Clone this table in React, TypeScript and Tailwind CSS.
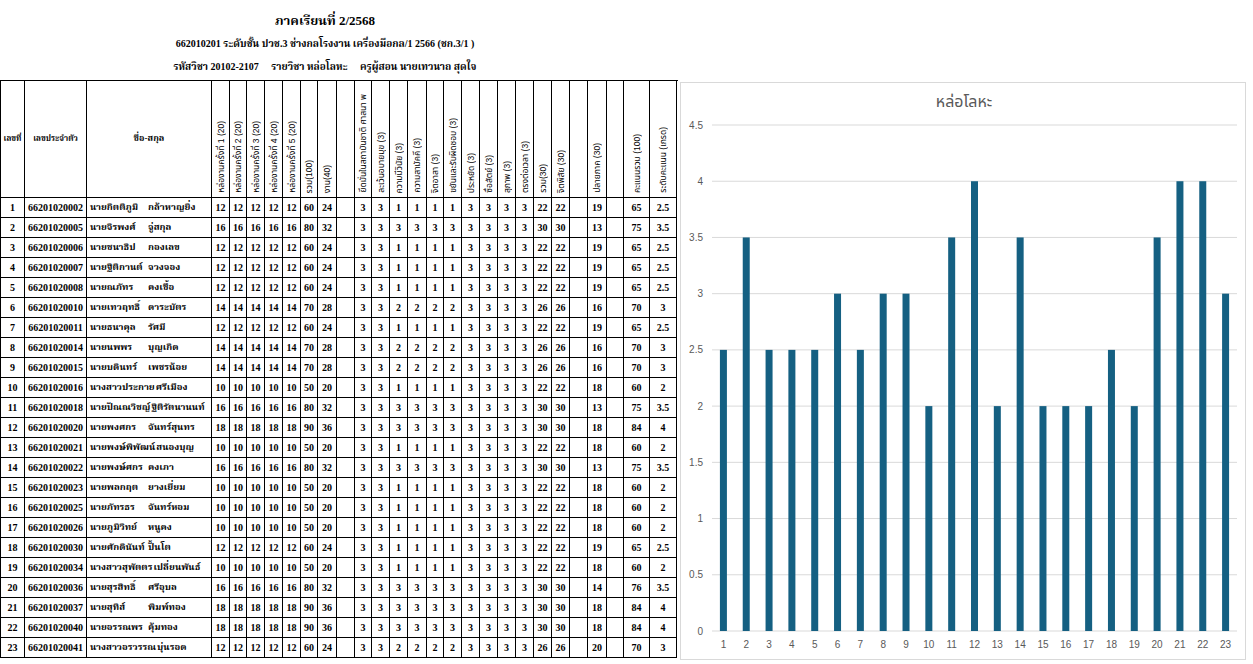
const FONT = "font-['Liberation_Serif','Noto_Serif_Thai','Noto_Sans_Thai','Tlwg_Typo','Norasi','Garuda','Loma','DejaVu_Serif',serif]";
const SANS = "font-['Liberation_Sans','Noto_Sans_Thai','Tlwg_Typo','Garuda','Loma','DejaVu_Sans',sans-serif]";

type Row = {
  id: string;
  first: string;
  last: string;
  h: number;
  p: 'a' | 'b' | 'c';
  fin: number;
  total: number;
  grade: number;
};

const pattern = {
  a: [3, 3, 1, 1, 1, 1, 3, 3, 3, 3],
  b: [3, 3, 2, 2, 2, 2, 3, 3, 3, 3],
  c: [3, 3, 3, 3, 3, 3, 3, 3, 3, 3],
};

const rows: Row[] = [
  { id: '66201020002', first: 'นายกิตติภูมิ', last: 'กล้าหาญยิ่ง', h: 12, p: 'a', fin: 19, total: 65, grade: 2.5 },
  { id: '66201020005', first: 'นายจิรพงศ์', last: 'จู่สกุล', h: 16, p: 'c', fin: 13, total: 75, grade: 3.5 },
  { id: '66201020006', first: 'นายชนาธิป', last: 'กองเลข', h: 12, p: 'a', fin: 19, total: 65, grade: 2.5 },
  { id: '66201020007', first: 'นายฐิติกานต์', last: 'จวงจอง', h: 12, p: 'a', fin: 19, total: 65, grade: 2.5 },
  { id: '66201020008', first: 'นายณภัทร', last: 'คงเชื้อ', h: 12, p: 'a', fin: 19, total: 65, grade: 2.5 },
  { id: '66201020010', first: 'นายเทวฤทธิ์', last: 'ดาระบัตร', h: 14, p: 'b', fin: 16, total: 70, grade: 3 },
  { id: '66201020011', first: 'นายธนาคุล', last: 'รัศมี', h: 12, p: 'a', fin: 19, total: 65, grade: 2.5 },
  { id: '66201020014', first: 'นายนพพร', last: 'บุญเกิด', h: 14, p: 'b', fin: 16, total: 70, grade: 3 },
  { id: '66201020015', first: 'นายบดินทร์', last: 'เพชรน้อย', h: 14, p: 'b', fin: 16, total: 70, grade: 3 },
  { id: '66201020016', first: 'นางสาวประกาย', last: 'ศรีเมือง', h: 10, p: 'a', fin: 18, total: 60, grade: 2 },
  { id: '66201020018', first: 'นายปัณณวิชญ์', last: 'ฐิติรัตนานนท์', h: 16, p: 'c', fin: 13, total: 75, grade: 3.5 },
  { id: '66201020020', first: 'นายพงศกร', last: 'จันทร์สุนทร', h: 18, p: 'c', fin: 18, total: 84, grade: 4 },
  { id: '66201020021', first: 'นายพงษ์พิพัฒน์', last: 'สนองบุญ', h: 10, p: 'a', fin: 18, total: 60, grade: 2 },
  { id: '66201020022', first: 'นายพงษ์ศกร', last: 'คงเภา', h: 16, p: 'c', fin: 13, total: 75, grade: 3.5 },
  { id: '66201020023', first: 'นายพลกฤต', last: 'ยางเยี่ยม', h: 10, p: 'a', fin: 18, total: 60, grade: 2 },
  { id: '66201020025', first: 'นายภัทรธร', last: 'จันทร์หอม', h: 10, p: 'a', fin: 18, total: 60, grade: 2 },
  { id: '66201020026', first: 'นายภูมิวิทย์', last: 'หนูคง', h: 10, p: 'a', fin: 18, total: 60, grade: 2 },
  { id: '66201020030', first: 'นายศักดินันท์', last: 'ปั้นโต', h: 12, p: 'a', fin: 19, total: 65, grade: 2.5 },
  { id: '66201020034', first: 'นางสาวสุพัตตร', last: 'เปลี่ยนพันธ์', h: 10, p: 'a', fin: 18, total: 60, grade: 2 },
  { id: '66201020036', first: 'นายสุรสิทธิ์', last: 'ศรีอุบล', h: 16, p: 'c', fin: 14, total: 76, grade: 3.5 },
  { id: '66201020037', first: 'นายสุทิส์', last: 'พิมพ์ทอง', h: 18, p: 'c', fin: 18, total: 84, grade: 4 },
  { id: '66201020040', first: 'นายอรรณพร', last: 'คุ้มทอง', h: 18, p: 'c', fin: 18, total: 84, grade: 4 },
  { id: '66201020041', first: 'นางสาวอรวรรณ', last: 'บุ่นรอด', h: 12, p: 'b', fin: 20, total: 70, grade: 3 },
];

// หัวตารางแนวตั้ง (ตั้งแต่คอลัมน์ที่ 4 เป็นต้นไป)
const vHeads = [
  'หล่องานครั้งที่ 1 (20)',
  'หล่องานครั้งที่ 2 (20)',
  'หล่องานครั้งที่ 3 (20)',
  'หล่องานครั้งที่ 4 (20)',
  'หล่องานครั้งที่ 5 (20)',
  'รวม(100)',
  'งาน(40)',
  '',
  'ยึดมั่นในสถาบันชาติ ศาสนา พ',
  'ละเว้นอบายมุข (3)',
  'ความมีวินัย (3)',
  'ความสามัคคี (3)',
  'จิตอาสา (3)',
  'ขยันและรับผิดชอบ (3)',
  'ประหยัด (3)',
  'ซื่อสัตย์ (3)',
  'สุภาพ (3)',
  'ตรงต่อเวลา (3)',
  'รวม(30)',
  'จิตพิสัย (30)',
  '',
  'ปลายภาค (30)',
  '',
  'คะแนนรวม (100)',
  'ระดับคะแนน (เกรด)',
];

const GRID =
  'grid grid-cols-[24px_62px_125px_18px_17px_18px_18px_18px_17px_19px_18px_17px_18px_18px_19px_17px_18px_18px_18px_18px_18px_18px_18px_18px_19px_17px_26px_27px]';

function Cell({ children, className = '' }: { children?: React.ReactNode; className?: string }) {
  return (
    <div className={`h-[20px] border-r border-b border-black flex items-center justify-center overflow-hidden whitespace-nowrap ${className}`}>
      {children}
    </div>
  );
}

function ScoreTable() {
  return (
    <div className={`${GRID} border-l border-t border-black w-[678px] ${FONT} font-bold text-black`}>
      {/* หัวตาราง */}
      <div className="h-[117px] border-r border-b border-black flex items-center justify-center text-[8px]">เลขที่</div>
      <div className="h-[117px] border-r border-b border-black flex items-center justify-center text-[8px]">เลขประจำตัว</div>
      <div className="h-[117px] border-r border-b border-black flex items-center justify-center text-[9px]">ชื่อ-สกุล</div>
      {vHeads.map((t, i) => (
        <div key={i} className="h-[117px] border-r border-b border-black flex items-end justify-center overflow-hidden pb-[4px]">
          {t && (
            <span className={`[writing-mode:vertical-rl] rotate-180 whitespace-nowrap text-[8.5px] leading-[10px] font-normal ${SANS}`}>
              {t}
            </span>
          )}
        </div>
      ))}

      {/* ข้อมูลนักเรียน */}
      {rows.map((r, i) => {
        const attrs = pattern[r.p];
        const sum = attrs.reduce((a, b) => a + b, 0);
        return [
          <Cell key={`n${i}`} className="text-[10px]">{i + 1}</Cell>,
          <Cell key={`id${i}`} className="text-[10px]">{r.id}</Cell>,
          <Cell key={`nm${i}`} className="justify-start pl-[3px] text-[9.5px]">
            <span className="inline-block min-w-[57px]">{r.first}</span>
            <span className="ml-[1px]">{r.last}</span>
          </Cell>,
          ...[0, 1, 2, 3, 4].map((k) => (
            <Cell key={`h${i}-${k}`} className="text-[10px]">{r.h}</Cell>
          )),
          <Cell key={`t${i}`} className="text-[10px]">{r.h * 5}</Cell>,
          <Cell key={`w${i}`} className="text-[10px]">{r.h * 2}</Cell>,
          <Cell key={`e1${i}`} />,
          ...attrs.map((v, k) => (
            <Cell key={`a${i}-${k}`} className="text-[10px]">{v}</Cell>
          )),
          <Cell key={`s${i}`} className="text-[10px]">{sum}</Cell>,
          <Cell key={`s2${i}`} className="text-[10px]">{sum}</Cell>,
          <Cell key={`e2${i}`} />,
          <Cell key={`f${i}`} className="text-[10px]">{r.fin}</Cell>,
          <Cell key={`e3${i}`} />,
          <Cell key={`tt${i}`} className="text-[10px]">{r.total}</Cell>,
          <Cell key={`g${i}`} className="text-[10px]">{r.grade}</Cell>,
        ];
      })}
    </div>
  );
}

function GradeChart() {
  const grades = rows.map((r) => r.grade);
  const ticks = [0, 0.5, 1, 1.5, 2, 2.5, 3, 3.5, 4, 4.5];
  const left = 31;
  const right = 556;
  const base = 548;
  const unit = (548 - 42) / 4.5;
  const step = (right - left) / grades.length;
  const gray = '#595959';

  return (
    <svg width="566" height="578" className="block">
      <text x="283" y="24" textAnchor="middle" fontSize="16" fill={gray} fontFamily="'Noto Sans Thai','Liberation Sans','DejaVu Sans',sans-serif">
        หล่อโลหะ
      </text>
      {ticks.map((t) => {
        const y = base - t * unit;
        return (
          <g key={t}>
            <line x1={left} x2={right} y1={y} y2={y} stroke="#d9d9d9" strokeWidth="1" />
            <text x="22" y={y + 3.5} textAnchor="end" fontSize="10" fill={gray} fontFamily="'Liberation Sans',sans-serif">
              {t}
            </text>
          </g>
        );
      })}
      {grades.map((g, i) => {
        const cx = left + step * (i + 0.5);
        const h = g * unit;
        return (
          <g key={i}>
            <rect x={cx - 3.5} y={base - h} width="7" height={h} fill="#156082" />
            <text x={cx} y={base + 17} textAnchor="middle" fontSize="10" fill={gray} fontFamily="'Liberation Sans',sans-serif">
              {i + 1}
            </text>
          </g>
        );
      })}
    </svg>
  );
}

export default function App() {
  return (
    <div className="w-[1253px] h-[664px] bg-white flex overflow-hidden">
      <div className="w-[680px] flex flex-col">
        <div className={`h-[80px] w-[650px] flex flex-col items-center ${FONT} font-bold text-black`}>
          <div className="mt-[11px] text-[13px] leading-[20px]">ภาคเรียนที่ 2/2568</div>
          <div className="mt-[4px] text-[10px] leading-[18px]">662010201 ระดับชั้น ปวช.3 ช่างกลโรงงาน เครื่องมือกล/1 2566 (ชก.3/1 )</div>
          <div className="mt-[5px] text-[10px] leading-[18px] whitespace-pre">รหัสวิชา 20102-2107     รายวิชา หล่อโลหะ     ครูผู้สอน นายเทวนาถ สุดใจ</div>
        </div>
        <ScoreTable />
      </div>
      <div className="mt-[82px] h-[578px] w-[566px] border border-[#d9d9d9]">
        <GradeChart />
      </div>
    </div>
  );
}
